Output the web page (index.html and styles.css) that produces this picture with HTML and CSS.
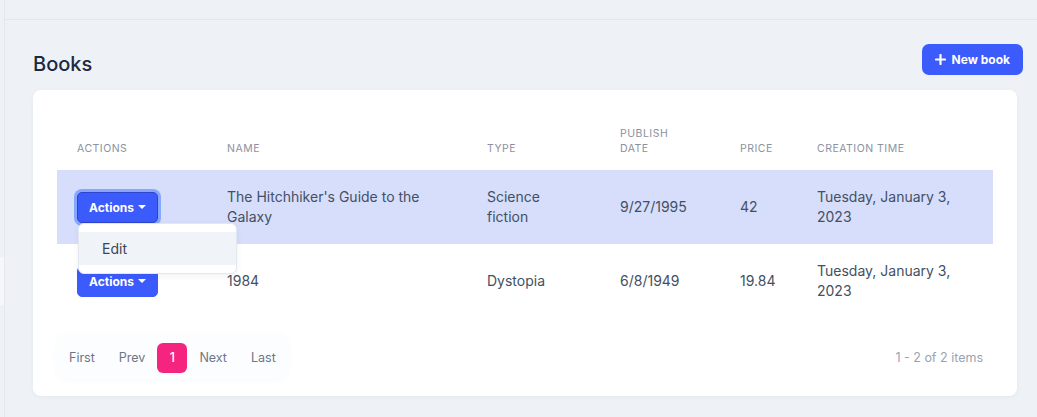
FILE: index.html
```html
<!DOCTYPE html>
<html>
<head>
<meta charset="utf-8">
<link rel="stylesheet" href="styles.css">
</head>
<body>
<div class="app">
  <div class="side"><div class="side-block"></div></div>
  <div class="main">
    <div class="topbar"></div>
    <div class="content">
      <div class="page-head">
        <h1 class="title">Books</h1>
        <button class="btn-new">
          <svg width="11" height="11" viewBox="0 0 11 11"><path d="M5.5 1v9M1 5.5h9" stroke="#fff" stroke-width="2.2" stroke-linecap="round"/></svg>
          <span>New book</span>
        </button>
      </div>
      <div class="card">
        <table class="grid">
          <colgroup>
            <col class="c-act"><col class="c-name"><col class="c-type"><col class="c-date"><col class="c-price"><col class="c-time">
          </colgroup>
          <thead>
            <tr>
              <th>Actions</th>
              <th>Name</th>
              <th>Type</th>
              <th>Publish<br>Date</th>
              <th>Price</th>
              <th>Creation Time</th>
            </tr>
          </thead>
          <tbody>
            <tr class="selected">
              <td>
                <div class="act-wrap">
                  <button class="btn-act focused">Actions <span class="caret"></span></button>
                  <div class="menu"><div class="menu-item">Edit</div></div>
                </div>
              </td>
              <td>The Hitchhiker's Guide to the Galaxy</td>
              <td>Science fiction</td>
              <td>9/27/1995</td>
              <td>42</td>
              <td>Tuesday, January 3, 2023</td>
            </tr>
            <tr>
              <td><button class="btn-act">Actions <span class="caret"></span></button></td>
              <td>1984</td>
              <td>Dystopia</td>
              <td>6/8/1949</td>
              <td>19.84</td>
              <td>Tuesday, January 3, 2023</td>
            </tr>
          </tbody>
        </table>
        <div class="footer">
          <div class="pager">
            <span class="pg">First</span>
            <span class="pg">Prev</span>
            <span class="pg active">1</span>
            <span class="pg">Next</span>
            <span class="pg">Last</span>
          </div>
          <div class="count">1 - 2 of 2 items</div>
        </div>
      </div>
    </div>
  </div>
</div>
</body>
</html>
```

FILE: styles.css
```css
* { box-sizing: border-box; }
html, body { margin: 0; padding: 0; }
body {
  background: #eef2f6;
  font-family: Inter, "Noto Sans", sans-serif;
  color: #435063;
  width: 1037px;
  height: 417px;
  overflow: hidden;
}
.app { display: flex; height: 417px; }
.side {
  width: 5px;
  flex: none;
  border-right: 1px solid #e4e8ee;
  background: #eef2f6;
  padding-top: 257px;
}
.side-block { height: 48px; background: #f5f7fa; }
.main { flex: 1; min-width: 0; }
.topbar { height: 20px; border-bottom: 1px solid #e3e8ee; }
.content { padding: 24px 14px 0 28px; }
.page-head {
  display: flex;
  justify-content: space-between;
  align-items: center;
  height: 31px;
}
.title {
  margin: 0;
  font-size: 20px;
  font-weight: 500;
  color: #1c2a3e;
  position: relative;
  top: 4px;
}
.btn-new {
  display: flex;
  align-items: center;
  gap: 6px;
  height: 31px;
  padding: 0 13px 0 13px;
  border: none;
  border-radius: 7px;
  background: #3c5bfd;
  color: #fff;
  font-family: Inter, sans-serif;
  font-size: 12px;
  font-weight: 700;
}
.card {
  margin-top: 15px;
  margin-right: 6px;
  background: #fff;
  border-radius: 8px;
  box-shadow: 0 1px 4px rgba(30, 50, 80, 0.05);
  padding: 24px 24px 16px 24px;
  height: 306px;
}
.grid { width: 936px; border-collapse: collapse; table-layout: fixed; }
.c-act { width: 150px; }
.c-name { width: 260px; }
.c-type { width: 133px; }
.c-date { width: 120px; }
.c-price { width: 77px; }
.c-time { width: 196px; }
.grid th {
  text-align: left;
  vertical-align: bottom;
  font-size: 10.5px;
  font-weight: 400;
  letter-spacing: 0.5px;
  text-transform: uppercase;
  color: #8c91a0;
  line-height: 15px;
  padding: 12px 20px 14px 20px;
}
.grid td {
  font-size: 14px;
  line-height: 20px;
  padding: 17px 20px;
  height: 74px;
  vertical-align: middle;
}
.grid tr.selected td { background: #d6defc; }
.act-wrap { position: relative; display: inline-block; }
.btn-act {
  display: inline-flex;
  align-items: center;
  gap: 4px;
  height: 31px;
  padding: 0 11px;
  border: 1px solid #3c5bfd;
  border-radius: 5px;
  background: #3c5bfd;
  color: #fff;
  font-family: Inter, sans-serif;
  font-size: 12px;
  font-weight: 700;
  vertical-align: middle;
}
.btn-act.focused {
  border-color: #2c45cc;
  box-shadow: 0 0 0 3px #86a7fb;
}
.caret {
  width: 0; height: 0;
  border-left: 4px solid transparent;
  border-right: 4px solid transparent;
  border-top: 4px solid #fff;
}
.menu {
  position: absolute;
  left: 1px;
  top: 100%;
  width: 159px;
  background: #fff;
  border: 1px solid #e4e8ee;
  border-radius: 6px;
  box-shadow: 0 2px 6px rgba(20, 40, 70, 0.06);
  padding: 8px 0;
  z-index: 5;
}
.menu-item {
  height: 33px;
  line-height: 33px;
  padding-left: 23px;
  background: #f0f3f7;
  font-size: 14px;
  color: #3c4657;
}
.footer {
  margin-top: 17px;
  display: flex;
  justify-content: space-between;
  align-items: center;
}
.pager {
  display: flex;
  align-items: center;
  height: 45px;
  padding: 0;
  border-radius: 12px;
  background: #fcfdfe;
  box-shadow: 0 0 6px rgba(235, 240, 246, 0.4);
}
.pg {
  height: 30px;
  line-height: 30px;
  padding: 0 12px;
  font-size: 12.5px;
  color: #6b7689;
}
.pg.active {
  width: 30px;
  padding: 0;
  text-align: center;
  background: #f5247f;
  color: #fff;
  border-radius: 6px;
  font-weight: 500;
}
.count {
  margin-right: 10px;
  font-size: 12.5px;
  color: #9aa3b0;
}
```
